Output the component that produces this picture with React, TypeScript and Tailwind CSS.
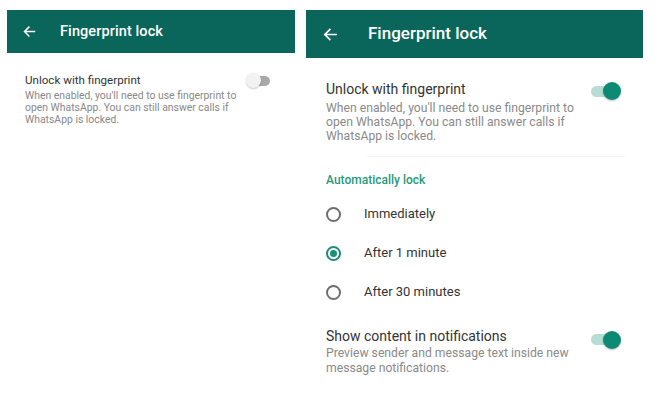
import React from "react";

const font = { fontFamily: "Roboto, 'Liberation Sans', sans-serif" };

function Arrow({ size }: { size: number }) {
  return (
    <svg width={size} height={size} viewBox="0 0 24 24" fill="none">
      <path d="M20 12H4.5M11 5l-7 7 7 7" stroke="white" strokeWidth="2.4" strokeLinecap="square" strokeLinejoin="miter" />
    </svg>
  );
}

function Radio({ on }: { on?: boolean }) {
  return (
    <div className={`w-[15px] h-[15px] rounded-full border-2 flex items-center justify-center ${on ? "border-[#1b8f78]" : "border-[#6e6e6e]"}`}>
      {on && <div className="w-[7px] h-[7px] rounded-full bg-[#1b8f78]" />}
    </div>
  );
}

function ToggleOn() {
  return (
    <div className="relative w-[30px] h-[20px] flex items-center">
      <div className="w-[26px] h-[11px] rounded-full bg-[#b5ddd3]" />
      <div className="absolute right-0 top-[1px] w-[18px] h-[18px] rounded-full bg-[#0d8a74] shadow-[0_1px_2px_rgba(0,0,0,0.25)]" />
    </div>
  );
}

export default function App() {
  return (
    <div className="w-[661px] h-[411px] bg-white flex items-start gap-[11px] pt-[10px] pl-[7px]" style={font}>
      {/* Left panel */}
      <div className="w-[288px] flex flex-col">
        <div className="h-[43px] bg-[#0a665a] flex items-center pl-[15px]">
          <Arrow size={15} />
          <span className="ml-[23px] text-white text-[14.5px] font-medium tracking-[0.1px]">Fingerprint lock</span>
        </div>
        <div className="flex pl-[18px] pr-[24px] pt-[20px]">
          <div className="flex-1">
            <div className="text-[11.6px] text-[#333] leading-[14px]">Unlock with fingerprint</div>
            <div className="text-[10.4px] text-[#888] leading-[11.8px] mt-[3px]">
              When enabled, you'll need to use fingerprint to
              <br />
              open WhatsApp. You can still answer calls if
              <br />
              WhatsApp is locked.
            </div>
          </div>
          <div className="relative w-[25px] h-[16px] mt-[0px]">
            <div className="absolute left-[8px] top-[3px] w-[16px] h-[10px] rounded-full bg-[#a8a8a8]" />
            <div className="absolute left-0 top-0 w-[15px] h-[15px] rounded-full bg-[#f2f2f2] shadow-[0_1px_2px_rgba(0,0,0,0.2)]" />
          </div>
        </div>
      </div>

      {/* Right panel */}
      <div className="w-[337px] flex flex-col">
        <div className="h-[48px] bg-[#0a665a] flex items-center pl-[16px]">
          <Arrow size={17} />
          <span className="ml-[29px] text-white text-[17px] font-medium">Fingerprint lock</span>
        </div>
        <div className="flex pl-[20px] pr-[22px] pt-[23px]">
          <div className="flex-1">
            <div className="text-[14px] text-[#333] leading-[17px]">Unlock with fingerprint</div>
            <div className="text-[12.2px] text-[#8a8a8a] leading-[14.2px] mt-[3px]">
              When enabled, you'll need to use fingerprint to
              <br />
              open WhatsApp. You can still answer calls if
              <br />
              WhatsApp is locked.
            </div>
          </div>
          <div className="mt-[0px]">
            <ToggleOn />
          </div>
        </div>
        <div className="ml-[61px] mr-[18px] mt-[12px] h-px bg-[#f2f2f2]" />
        <div className="pl-[20px] pt-[16px] text-[12px] font-medium text-[#1f9a7c] leading-[15px]">Automatically lock</div>
        <div className="flex flex-col pl-[20px] pt-[19px] gap-[24px]">
          {[
            ["Immediately", false],
            ["After 1 minute", true],
            ["After 30 minutes", false],
          ].map(([label, on]) => (
            <div key={label as string} className="flex items-center h-[15px]">
              <Radio on={on as boolean} />
              <span className="ml-[23px] text-[13px] text-[#333]">{label as string}</span>
            </div>
          ))}
        </div>
        <div className="flex pl-[20px] pr-[22px] pt-[28px]">
          <div className="flex-1">
            <div className="text-[14px] text-[#333] leading-[17px]">Show content in notifications</div>
            <div className="text-[12.2px] text-[#8a8a8a] leading-[15px] mt-[1px]">
              Preview sender and message text inside new
              <br />
              message notifications.
            </div>
          </div>
          <div className="mt-[2px]">
            <ToggleOn />
          </div>
        </div>
      </div>
    </div>
  );
}
